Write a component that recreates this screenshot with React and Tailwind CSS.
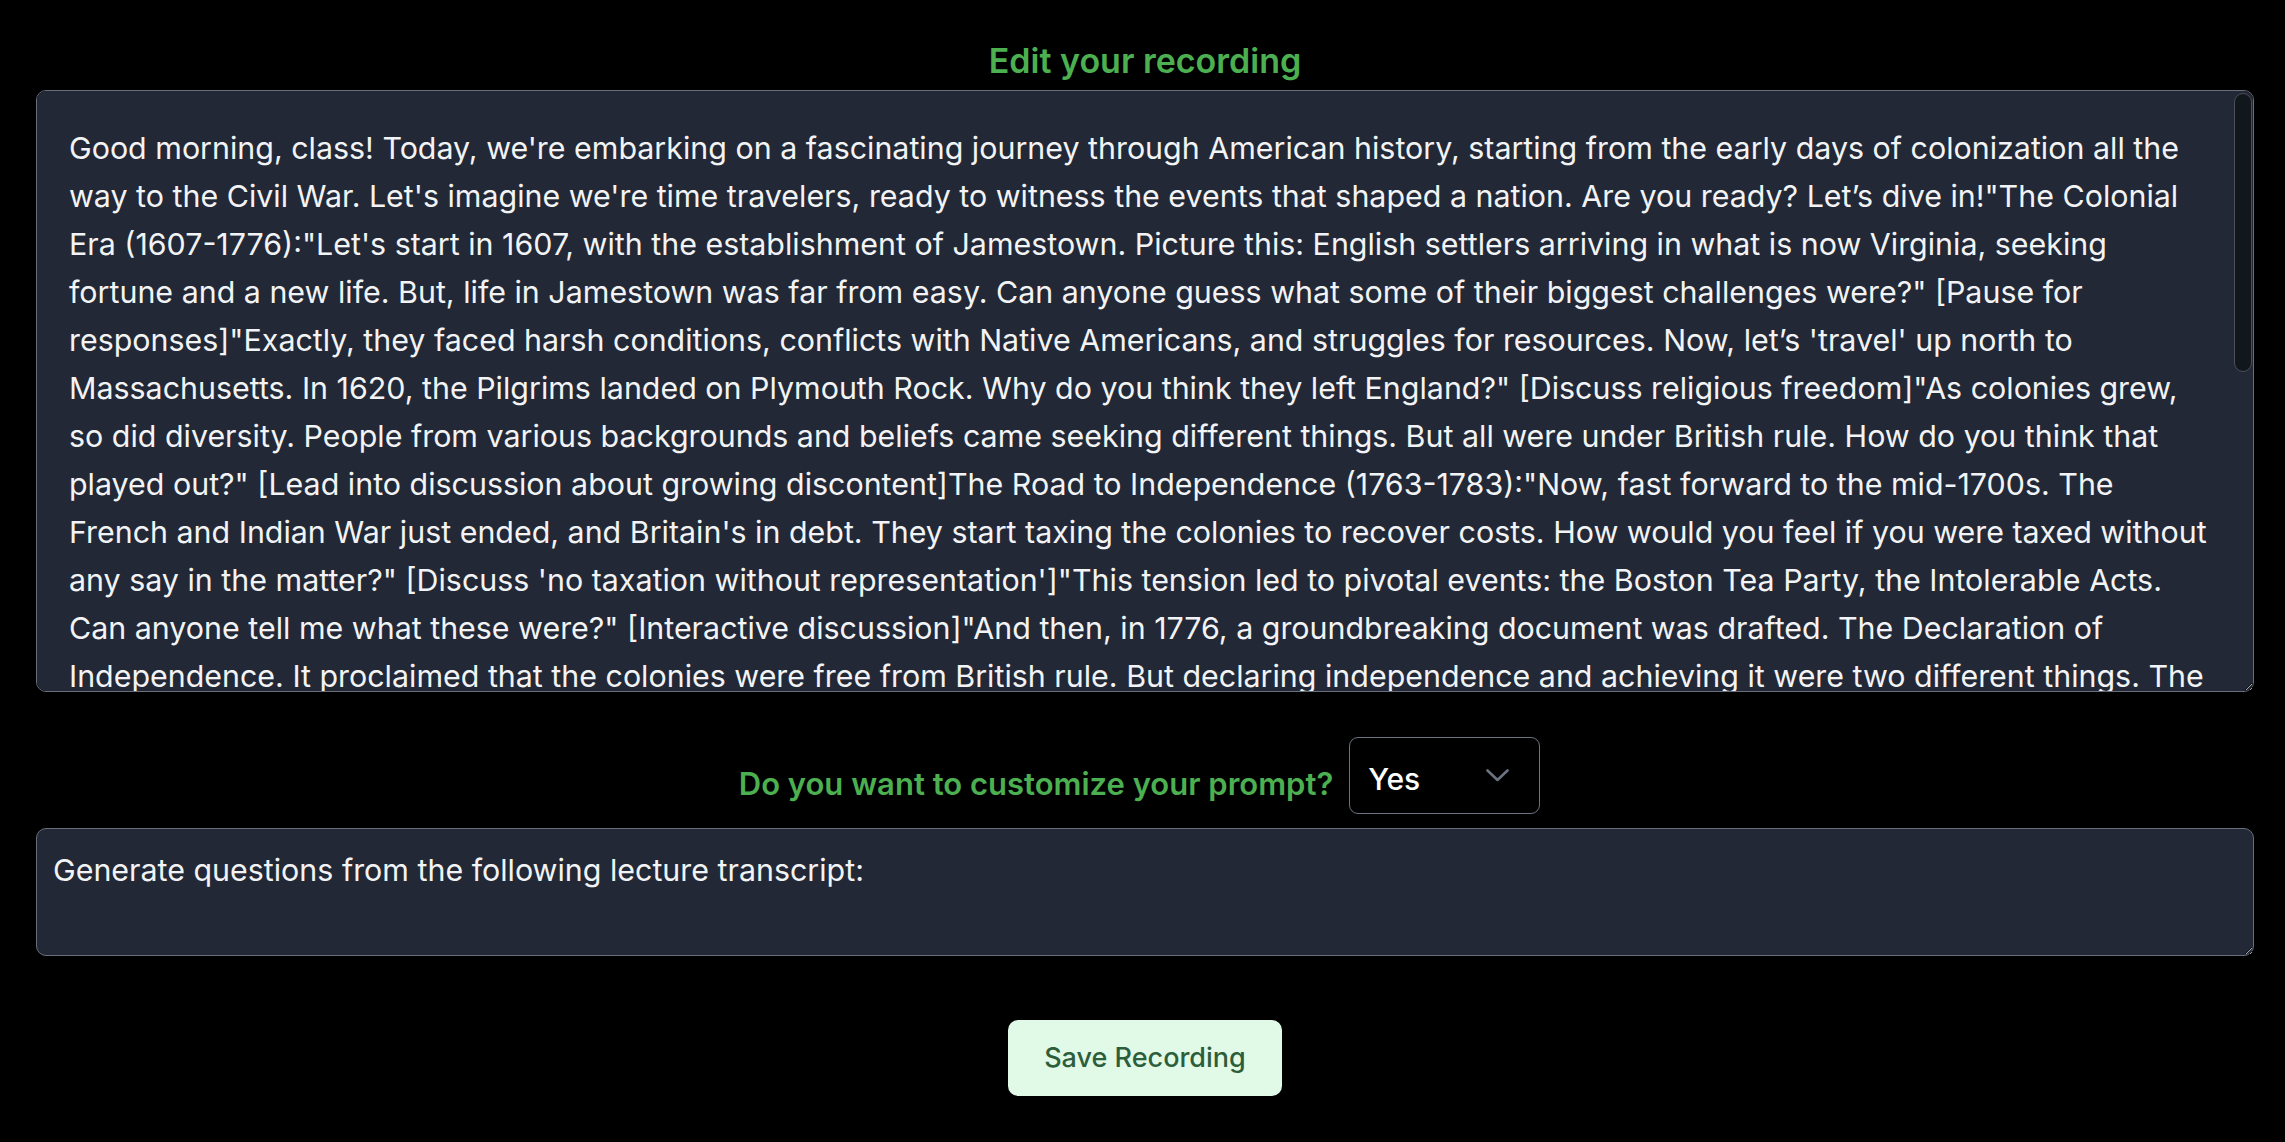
import React from "react";

const lines = [
  "Good morning, class! Today, we're embarking on a fascinating journey through American history, starting from the early days of colonization all the",
  "way to the Civil War. Let's imagine we're time travelers, ready to witness the events that shaped a nation. Are you ready? Let’s dive in!\"The Colonial",
  "Era (1607-1776):\"Let's start in 1607, with the establishment of Jamestown. Picture this: English settlers arriving in what is now Virginia, seeking",
  "fortune and a new life. But, life in Jamestown was far from easy. Can anyone guess what some of their biggest challenges were?\" [Pause for",
  "responses]\"Exactly, they faced harsh conditions, conflicts with Native Americans, and struggles for resources. Now, let’s 'travel' up north to",
  "Massachusetts. In 1620, the Pilgrims landed on Plymouth Rock. Why do you think they left England?\" [Discuss religious freedom]\"As colonies grew,",
  "so did diversity. People from various backgrounds and beliefs came seeking different things. But all were under British rule. How do you think that",
  "played out?\" [Lead into discussion about growing discontent]The Road to Independence (1763-1783):\"Now, fast forward to the mid-1700s. The",
  "French and Indian War just ended, and Britain's in debt. They start taxing the colonies to recover costs. How would you feel if you were taxed without",
  "any say in the matter?\" [Discuss 'no taxation without representation']\"This tension led to pivotal events: the Boston Tea Party, the Intolerable Acts.",
  "Can anyone tell me what these were?\" [Interactive discussion]\"And then, in 1776, a groundbreaking document was drafted. The Declaration of",
  "Independence. It proclaimed that the colonies were free from British rule. But declaring independence and achieving it were two different things. The",
];

const rest =
  "Revolutionary War was long and difficult, lasting from 1775 to 1783. Who can name some key battles or figures from this time?\" [Pause for responses]\"Great answers! Lexington and Concord, Saratoga, Yorktown, and leaders like George Washington. With help from France, the colonists finally won their independence in 1783 with the Treaty of Paris.\"A New Nation (1783-1860):\"After the war, the young nation faced a new challenge: how to govern itself. The Articles of Confederation were too weak, so in 1787, delegates met in Philadelphia to write the Constitution. Why do you think compromise was so important?\" [Discuss the Great Compromise]\"In the decades that followed, the nation expanded westward. The Louisiana Purchase in 1803 doubled the size of the country. But expansion raised a difficult question: would new states allow slavery?\" [Discuss the Missouri Compromise]\"Tensions grew between the North and the South, over economics, states' rights, and above all, slavery.\"The Road to the Civil War (1850-1861):\"The Compromise of 1850, the Kansas-Nebraska Act, and the Dred Scott decision all deepened the divide. When Abraham Lincoln was elected in 1860, several Southern states seceded from the Union. What do you think happened next?\" [Pause for responses]\"In April 1861, Confederate forces fired on Fort Sumter, and the Civil War began. It would become the deadliest conflict in American history.\"Conclusion:\"So, class, from Jamestown to Fort Sumter, we've traveled through more than 250 years of history. Think about how each event led to the next. Next time, we'll explore the Civil War in more detail. Any questions before we finish?\"";

const transcript = lines.join("\n") + "\n" + rest;

export default function App() {
  return (
    <div className="min-h-[1142px] w-full bg-black font-['Inter',sans-serif]">
      <div className="ml-[36px] mr-[31px] flex flex-col items-center">
        <h1 className="pt-[41px] pb-[9px] text-[34px] leading-[40px] font-semibold text-[#4caf50]">
          Edit your recording
        </h1>
        <div className="relative w-full">
          <textarea
            readOnly
            value={transcript}
            className="block h-[602px] w-full resize-y overflow-y-scroll rounded-[10px] border border-[#686e7a] bg-[#222835] px-8 pt-[33px] pb-8 text-[30.4px] leading-[48px] text-[#f2f3f5] outline-none [scrollbar-width:none] scheme-dark"
          />
          <div className="pointer-events-none absolute right-[2px] top-[3px] h-[279px] w-[18px] rounded-full border border-[#4a4f5a] bg-[#12161d]" />
        </div>
        <div className="mt-[45px] flex items-start justify-center gap-4 pr-[11px]">
          <label className="mt-[27px] text-[31px] leading-[40px] font-semibold text-[#4caf50]">
            Do you want to customize your prompt?
          </label>
          <div className="relative h-[77px] w-[191px]">
            <select
              defaultValue="Yes"
              className="h-full w-full appearance-none rounded-[9px] border border-[#6b7280] bg-black pl-[18px] pt-[8px] text-[30px] font-medium text-white outline-none"
            >
              <option>Yes</option>
              <option>No</option>
            </select>
            <svg
              className="pointer-events-none absolute left-[137px] top-[32px]"
              width="23"
              height="13"
              viewBox="0 0 23 13"
              fill="none"
            >
              <polyline
                points="1.5,1.5 11.5,11 21.5,1.5"
                stroke="#6b7280"
                strokeWidth="2.6"
                strokeLinecap="round"
                strokeLinejoin="round"
              />
            </svg>
          </div>
        </div>
        <textarea
          readOnly
          value="Generate questions from the following lecture transcript:"
          className="mt-[14px] block h-[128px] w-full resize-y rounded-[10px] border border-[#686e7a] bg-[#222835] px-4 pt-[17px] pb-4 text-[30.4px] leading-[48px] text-[#f2f3f5] outline-none scheme-dark"
        />
        <button className="mt-[64px] h-[76px] w-[274px] rounded-[10px] bg-[#e1f9e7] text-[27px] font-medium text-[#2c5e3b]">
          Save Recording
        </button>
      </div>
    </div>
  );
}
